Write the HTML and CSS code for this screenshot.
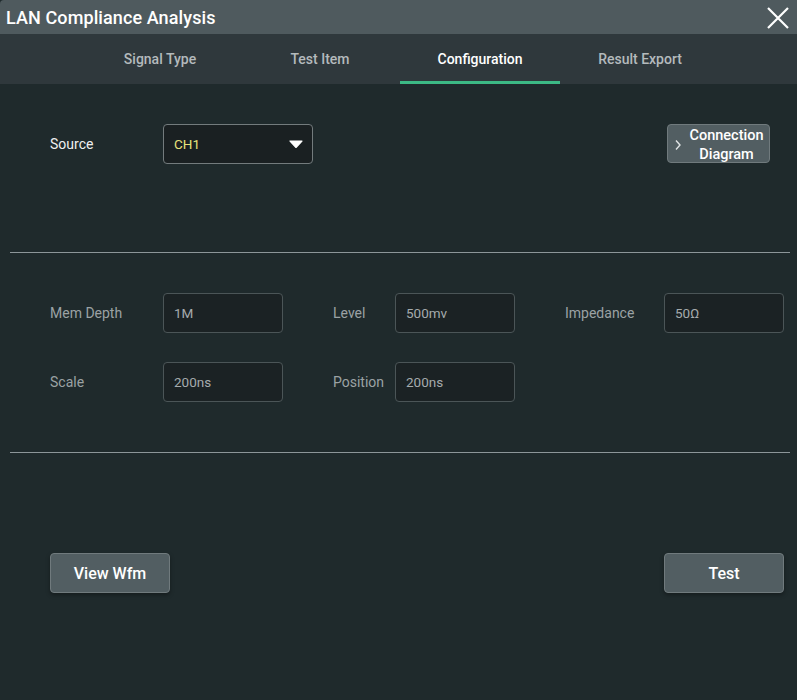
FILE: index.html
```html
<!DOCTYPE html>
<html>
<head>
<meta charset="utf-8">
<link rel="stylesheet" href="styles.css">
</head>
<body>
<div class="dialog">
  <div class="titlebar">
    <span class="title">LAN Compliance Analysis</span>
    <svg class="close" width="24" height="24" viewBox="0 0 24 24"><path d="M2 2 L22 22 M22 2 L2 22" stroke="#ffffff" stroke-width="2.2" fill="none"/></svg>
  </div>
  <div class="tabs">
    <div class="tab">Signal Type</div>
    <div class="tab">Test Item</div>
    <div class="tab active">Configuration</div>
    <div class="tab">Result Export</div>
  </div>
  <div class="content">
    <div class="source-row">
      <div class="source-left">
        <span class="label light">Source</span>
        <div class="select">
          <span class="ch">CH1</span>
          <svg width="14" height="8" viewBox="0 0 14 8"><path d="M1 1 L13 1 L7 7.5 Z" fill="#ffffff" stroke="#ffffff" stroke-width="1.2" stroke-linejoin="round"/></svg>
        </div>
      </div>
      <div class="conn-btn">
        <svg width="8" height="12" viewBox="0 0 8 12"><path d="M2 1.5 L6 6 L2 10.5" stroke="#e0e4e5" stroke-width="1.4" fill="none"/></svg>
        <span class="conn-text">Connection<br>Diagram</span>
      </div>
    </div>
    <div class="divider"></div>
    <div class="params">
      <span class="label">Mem Depth</span><div class="field">1M</div>
      <span class="label">Level</span><div class="field">500mv</div>
      <span class="label">Impedance</span><div class="field">50Ω</div>
      <span class="label">Scale</span><div class="field">200ns</div>
      <span class="label">Position</span><div class="field">200ns</div>
    </div>
    <div class="divider"></div>
    <div class="actions">
      <div class="btn">View Wfm</div>
      <div class="btn">Test</div>
    </div>
  </div>
</div>
</body>
</html>
```
FILE: styles.css
```css
html, body {
  margin: 0;
  padding: 0;
  background: #1f2a2c;
  font-family: Roboto, "Liberation Sans", sans-serif;
}
.dialog {
  width: 797px;
  height: 700px;
  display: flex;
  flex-direction: column;
  background: #1f2a2c;
  overflow: hidden;
}
.titlebar {
  height: 34px;
  background: #4f5a5e;
  display: flex;
  align-items: center;
  justify-content: space-between;
  padding: 0 7px 0 6px;
  border-top-left-radius: 4px;
}
.title {
  color: #ffffff;
  font-size: 18px;
  font-weight: 500;
  letter-spacing: 0.1px;
}
.close {
  display: block;
  margin-top: 1px;
}
.tabs {
  height: 50px;
  background: #2f383c;
  display: flex;
  padding-left: 80px;
}
.tab {
  width: 160px;
  box-sizing: border-box;
  display: flex;
  align-items: center;
  justify-content: center;
  color: #b4babc;
  font-size: 14px;
  font-weight: 500;
  padding-top: 3px;
  border-bottom: 3px solid transparent;
}
.tab.active {
  color: #ffffff;
  border-bottom-color: #3cb985;
}
.content {
  flex: 1;
  display: flex;
  flex-direction: column;
  padding: 0 7px 0 10px;
}
.source-row {
  display: flex;
  justify-content: space-between;
  align-items: flex-start;
  padding: 40px 20px 0 40px;
  height: 168px;
  box-sizing: border-box;
}
.source-left {
  display: flex;
  align-items: center;
}
.label {
  color: #9ba2a4;
  font-size: 14px;
  font-weight: 400;
}
.label.light {
  color: #eef0f0;
  width: 113px;
}
.select {
  width: 150px;
  height: 40px;
  box-sizing: border-box;
  border: 1px solid #737b7d;
  border-radius: 4px;
  background: #1a2022;
  display: flex;
  align-items: center;
  justify-content: space-between;
  padding: 0 9px 0 10px;
}
.ch {
  color: #e8e37a;
  font-size: 13.5px;
}
.conn-btn {
  width: 103px;
  height: 39px;
  box-sizing: border-box;
  background: #525e62;
  border: 1px solid #707a7d;
  border-radius: 4px;
  display: flex;
  align-items: center;
  padding-left: 6px;
  padding-top: 3px;
}
.conn-text {
  flex: 1;
  text-align: center;
  color: #ffffff;
  font-size: 14.5px;
  font-weight: 500;
  line-height: 19px;
  margin-left: 2px;
}
.divider {
  height: 1px;
  background: #8c9699;
}
.params {
  display: grid;
  grid-template-columns: 113px 120px 50px 62px 120px 50px 99px 120px;
  grid-auto-rows: 40px;
  row-gap: 29px;
  align-items: center;
  padding: 40px 0 0 40px;
  height: 199px;
  box-sizing: border-box;
}
.params .label:nth-child(1), .params .label:nth-child(7) { grid-column: 1; }
.params .label:nth-child(3), .params .label:nth-child(9) { grid-column: 4; }
.params .label:nth-child(5) { grid-column: 7; }
.params .field:nth-child(2), .params .field:nth-child(8) { grid-column: 2; }
.params .field:nth-child(4), .params .field:nth-child(10) { grid-column: 5; }
.params .field:nth-child(6) { grid-column: 8; }
.field {
  height: 40px;
  box-sizing: border-box;
  border: 1px solid #4b5557;
  border-radius: 4px;
  background: #1b2224;
  color: #a5abad;
  font-size: 13.5px;
  display: flex;
  align-items: center;
  padding-left: 10px;
}
.actions {
  display: flex;
  justify-content: space-between;
  padding: 100px 6px 0 40px;
}
.btn {
  width: 120px;
  height: 40px;
  box-sizing: border-box;
  background: #525e62;
  border: 1px solid #707a7d;
  border-radius: 4px;
  color: #ffffff;
  font-size: 16px;
  font-weight: 500;
  display: flex;
  align-items: center;
  justify-content: center;
  box-shadow: 0 2px 4px rgba(0,0,0,0.35);
}
```
